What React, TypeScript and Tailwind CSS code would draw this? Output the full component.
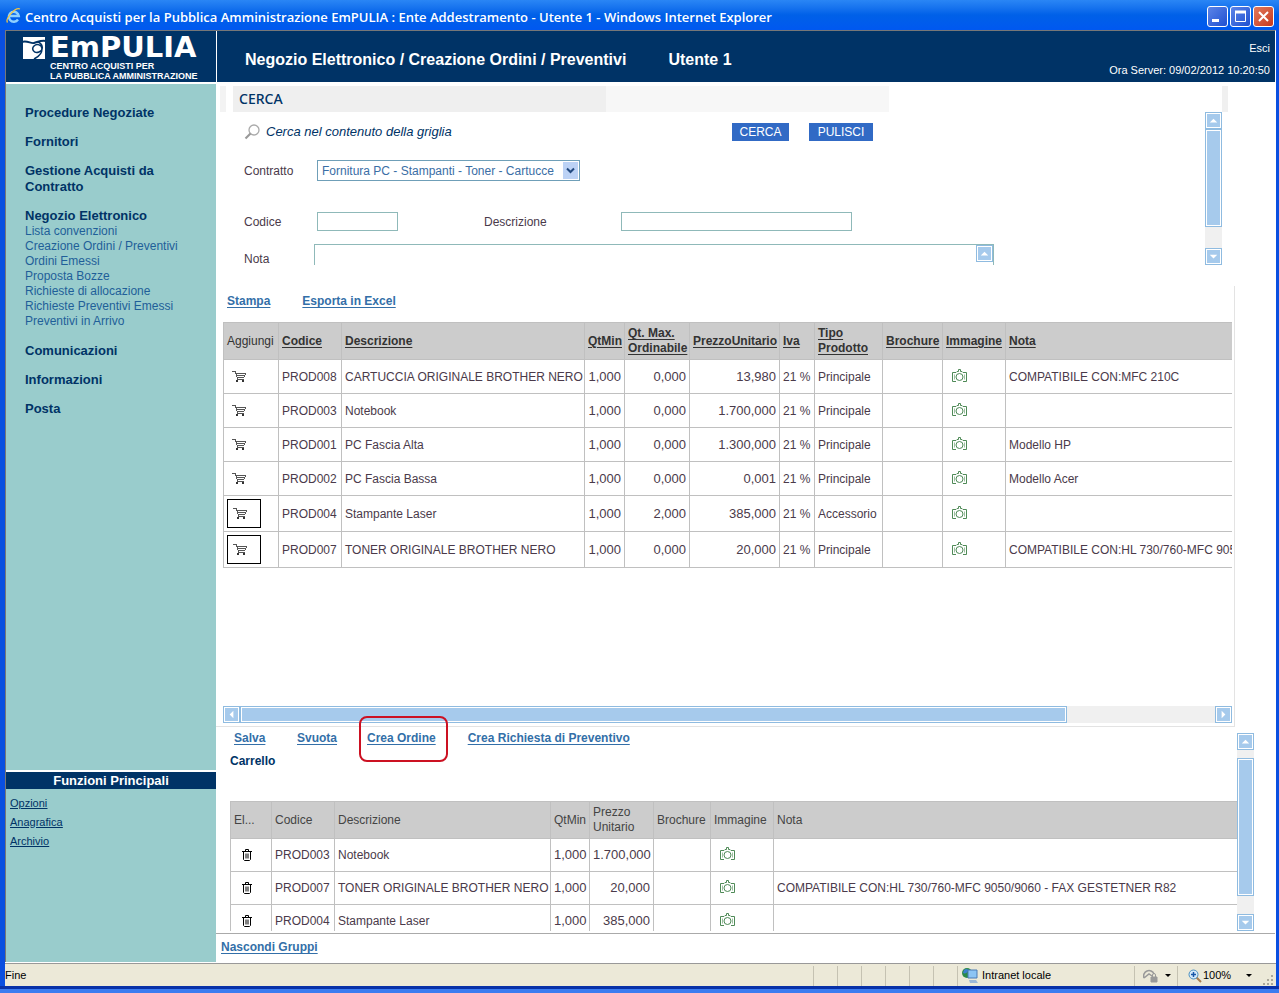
import type { ReactNode } from 'react'

type Product = {
  code: string
  name: string
  min: string
  max: string
  price: string
  type: string
  note: string
  inCart?: boolean
}

const products: Product[] = [
  { code: 'PROD008', name: 'CARTUCCIA ORIGINALE BROTHER NERO', min: '1,000', max: '0,000', price: '13,980', type: 'Principale', note: 'COMPATIBILE CON:MFC 210C' },
  { code: 'PROD003', name: 'Notebook', min: '1,000', max: '0,000', price: '1.700,000', type: 'Principale', note: '' },
  { code: 'PROD001', name: 'PC Fascia Alta', min: '1,000', max: '0,000', price: '1.300,000', type: 'Principale', note: 'Modello HP' },
  { code: 'PROD002', name: 'PC Fascia Bassa', min: '1,000', max: '0,000', price: '0,001', type: 'Principale', note: 'Modello Acer' },
  { code: 'PROD004', name: 'Stampante Laser', min: '1,000', max: '2,000', price: '385,000', type: 'Accessorio', note: '', inCart: true },
  { code: 'PROD007', name: 'TONER ORIGINALE BROTHER NERO', min: '1,000', max: '0,000', price: '20,000', type: 'Principale', note: 'COMPATIBILE CON:HL 730/760-MFC 9050/9060 - FAX GESTETNER R82', inCart: true },
]

const cart = [
  { code: 'PROD003', name: 'Notebook', min: '1,000', price: '1.700,000', note: '' },
  { code: 'PROD007', name: 'TONER ORIGINALE BROTHER NERO', min: '1,000', price: '20,000', note: 'COMPATIBILE CON:HL 730/760-MFC 9050/9060 - FAX GESTETNER R82' },
  { code: 'PROD004', name: 'Stampante Laser', min: '1,000', price: '385,000', note: '' },
]

const shopLinks = [
  'Lista convenzioni',
  'Creazione Ordini / Preventivi',
  'Ordini Emessi',
  'Proposta Bozze',
  'Richieste di allocazione',
  'Richieste Preventivi Emessi',
  'Preventivi in Arrivo',
]

function CartIcon() {
  return (
    <svg width="15" height="12" viewBox="0 0 15 12" fill="#555" shapeRendering="crispEdges">
      <path d="M0 0h4v1H0zM3 1h1v2H3zM4 2h10v1H4zM4 3h1v3H4zM5 4h8v1H5zM5 6h7v1H5zM5 7h1v2H5zM5 8h7v1H5zM13 3h1v1h-1zM12 5h1v1h-1z" />
      <path d="M4 9h2v2H4zM10 9h2v2h-2z" fill="#333" />
    </svg>
  )
}

function CameraIcon() {
  return (
    <svg width="15" height="13" viewBox="0 0 15 13" fill="none" stroke="#4f8a57" className="mb-[3px]">
      <path d="M4 12.500H.5v-9H4l1-1h1.500v-2h2v2H10l1 1h3.500v9H11" />
      <path d="M2.500 5.500v5M12.500 5.500v5" stroke="#9cc0a0" />
      <circle cx="7.500" cy="8" r="3.500" />
    </svg>
  )
}

function TrashIcon() {
  return (
    <svg width="10" height="12" viewBox="0 0 10 12" fill="none" stroke="#000">
      <path d="M0 2.500h10M3.500 2V.5h3V2M1.500 3v7.500l1 1h5l1-1V3M4 4.500v5M6 4.500v5" />
    </svg>
  )
}

const arrows = {
  up: 'M4 10h8L8 6z',
  down: 'M4 6h8l-4 4z',
  left: 'M10 4v8L6 8z',
  right: 'M6 4v8l4-4z',
}

function ScrollButton({ dir, label }: { dir: keyof typeof arrows; label: string }) {
  return (
    <button aria-label={label} className="flex size-[17px] shrink-0 items-center justify-center border border-[#8fbbe0] bg-[#a6caec] shadow-[inset_0_0_0_1px_white]">
      <svg width="15" height="15" viewBox="0 0 16 16" fill="#fff">
        <path d={arrows[dir]} />
      </svg>
    </button>
  )
}

function WinButton({ label, close, children }: { label: string; close?: boolean; children: ReactNode }) {
  return (
    <button
      aria-label={label}
      className={`flex size-[21px] items-center justify-center rounded-[3px] border border-white ${close ? 'bg-linear-to-br from-[#e0785c] to-[#c8361a]' : 'bg-linear-to-br from-[#5c84e8] to-[#1f4fd0]'}`}
    >
      <svg width="19" height="19" viewBox="0 0 19 19" fill="none" stroke="#fff">
        {children}
      </svg>
    </button>
  )
}

function TitleBar() {
  return (
    <div className="flex h-[30px] items-center gap-1 bg-linear-to-b from-[#2a86f5] via-[#0060e8] to-[#0058f0] pr-[5px] pl-1.5">
      <svg width="15" height="17" viewBox="0 0 15 17" fill="none">
        <path d="M12 12.500a5 5 0 1 1 .8-3.500H4" stroke="#8fd0ff" strokeWidth="2.400" />
        <path d="M1.500 15.500C-1 12 9 0 14 2" stroke="#f4c542" strokeWidth="1.300" />
      </svg>
      <h1 className="flex-1 truncate pt-1 font-['Open_Sans',sans-serif] text-[13px] leading-5 font-semibold text-white">
        Centro Acquisti per la Pubblica Amministrazione EmPULIA : Ente Addestramento - Utente 1 - Windows Internet Explorer
      </h1>
      <div className="flex gap-0.5 pt-0.5">
        <WinButton label="Riduci a icona">
          <path d="M4 13.500h7" strokeWidth="3" />
        </WinButton>
        <WinButton label="Ingrandisci">
          <path d="M4.500 4.500h10v10h-10z" />
          <path d="M4 5h11" strokeWidth="3" />
        </WinButton>
        <WinButton label="Chiudi" close>
          <path d="m5 5 9 9m0-9-9 9" strokeWidth="2" />
        </WinButton>
      </div>
    </div>
  )
}

function Logo() {
  return (
    <div className="flex w-[210px] shrink-0 items-start gap-1 pt-px pl-[17px] text-white">
      <svg width="23" height="27" viewBox="0 0 23 27" className="shrink-0">
        <path d="M0 5h22v22H0z" fill="#fff" />
        <path d="M-1 10c5-2 9 2 12 1 4-1 7-3 12-2" fill="none" stroke="#036" strokeWidth="2" />
        <path d="M15 10c5 2 6 8 1 10s-8-3-5-6 8-1 8 3-4 8-8 10" fill="none" stroke="#036" strokeWidth="1.500" />
      </svg>
      <div>
        <div className="font-['DejaVu_Sans',sans-serif] text-[29px] leading-[31px] font-bold">EmPULIA</div>
        <div className="-mt-0.5 text-[9px] leading-[10px] font-bold whitespace-nowrap">
          CENTRO ACQUISTI PER
          <br />
          LA PUBBLICA AMMINISTRAZIONE
        </div>
      </div>
    </div>
  )
}

function Header() {
  return (
    <header className="flex h-[51px] bg-[#003366] text-white">
      <Logo />
      <div className="flex flex-1 items-center gap-[42px] border-l border-white pt-1.5 pl-7 text-base font-bold">
        <h2>Negozio Elettronico / Creazione Ordini / Preventivi</h2>
        <span>Utente 1</span>
      </div>
      <div className="flex flex-col items-end gap-2 pt-2.5 pr-[5px] text-[11px] leading-[14px]">
        <a href="#esci">Esci</a>
        <span>Ora Server: 09/02/2012 10:20:50</span>
      </div>
    </header>
  )
}

function Sidebar() {
  return (
    <aside className="flex w-[210px] shrink-0 flex-col bg-[#99cccc] text-[#003366]">
      <nav className="flex flex-1 flex-col gap-[13px] pt-[21px] pl-[19px] text-[13px] leading-4 font-bold">
        <a href="#procedure">Procedure Negoziate</a>
        <a href="#fornitori">Fornitori</a>
        <a href="#gestione" className="w-36">Gestione Acquisti da Contratto</a>
        <div>
          <a href="#negozio">Negozio Elettronico</a>
          <ul className="pb-px text-xs leading-[15px] font-normal text-[#1f5f99]">
            {shopLinks.map((text) => (
              <li key={text}>
                <a href="#negozio">{text}</a>
              </li>
            ))}
          </ul>
        </div>
        <a href="#comunicazioni">Comunicazioni</a>
        <a href="#informazioni">Informazioni</a>
        <a href="#posta">Posta</a>
      </nav>
      <div className="border-t-2 border-white bg-[#003366] text-center text-[13px] leading-[17px] font-bold text-white">Funzioni Principali</div>
      <div className="flex h-[173px] flex-col items-start gap-1 pt-[7px] pl-1 text-[11px] leading-[15px] underline">
        <a href="#opzioni">Opzioni</a>
        <a href="#anagrafica">Anagrafica</a>
        <a href="#archivio">Archivio</a>
      </div>
    </aside>
  )
}

function SearchForm() {
  const input = 'border border-[#8fb9b9] bg-white px-1 outline-none'
  return (
    <section>
      <div className="flex h-[26px]">
        <div className="ml-1 w-1.5 bg-[#f3f3f3]" />
        <h3 className="ml-[7px] w-[373px] bg-[#efefef] pl-1.5 font-['Noto_Sans',sans-serif] text-sm leading-[26px] font-medium text-[#003366]">CERCA</h3>
        <div className="w-[283px] bg-[#f7f7f7]" />
        <div className="mr-[47px] ml-auto w-1.5 bg-[#f0f0f0]" />
      </div>
      <div className="mr-[53px] flex h-[153px]">
        <div className="flex-1 overflow-hidden pt-[11px] pl-7 text-[#4a3a4a]">
          <div className="flex h-[18px] items-center">
            <svg width="17" height="16" viewBox="0 0 17 16" fill="none">
              <circle cx="10" cy="6" r="5" stroke="#aaa" strokeWidth="1.300" />
              <path d="m6.500 9.500-5 5" stroke="#999" strokeWidth="2.200" />
            </svg>
            <span className="ml-[5px] w-[466px] text-[13px] text-[#003366] italic">Cerca nel contenuto della griglia</span>
            <button className="h-[18px] w-[57px] bg-[#316ac5] text-xs text-white">CERCA</button>
            <button className="ml-5 h-[18px] w-16 bg-[#316ac5] text-xs text-white">PULISCI</button>
          </div>
          <div className="mt-[19px] flex h-[21px] items-center">
            <label htmlFor="contratto" className="w-[73px]">Contratto</label>
            <div className="relative">
              <select id="contratto" className="h-[21px] w-[263px] appearance-none border border-[#6f9fb8] bg-white pl-1 text-[#3a6ea5]">
                <option>Fornitura PC - Stampanti - Toner - Cartucce</option>
              </select>
              <svg width="15" height="17" viewBox="0 0 15 17" className="pointer-events-none absolute top-0.5 right-0.5">
                <rect width="15" height="17" fill="#bcd2f5" />
                <path d="m4 6.500 3.500 3.500L11 6.500" fill="none" stroke="#234a80" strokeWidth="2" />
              </svg>
            </div>
          </div>
          <div className="mt-[31px] flex h-[19px] items-center">
            <label htmlFor="codice" className="w-[73px]">Codice</label>
            <input id="codice" className={`h-[19px] w-[81px] ${input}`} />
            <label htmlFor="descrizione" className="ml-[86px] w-[137px]">Descrizione</label>
            <input id="descrizione" className={`h-[19px] w-[231px] ${input}`} />
          </div>
          <div className="mt-[13px] flex">
            <label htmlFor="nota" className="w-[70px] pt-[9px] leading-3">Nota</label>
            <div className="flex h-10 w-[680px] border border-[#8fb9b9]">
              <textarea id="nota" className="flex-1 resize-none overflow-hidden outline-none" />
              <ScrollButton dir="up" label="Scorri nota in alto" />
            </div>
          </div>
        </div>
        <div className="flex w-[17px] flex-col bg-[#f0f0f0]">
          <ScrollButton dir="up" label="Scorri in alto" />
          <div className="h-[98px] border border-[#8fbbe0] bg-[#a6caec] shadow-[inset_0_0_0_1px_white]" />
          <div className="flex-1" />
          <ScrollButton dir="down" label="Scorri in basso" />
        </div>
      </div>
    </section>
  )
}

function ProductTable() {
  const cell = 'border border-[#c0c0c0] px-[3px]'
  return (
    <table className="w-[1220px] table-fixed border-collapse text-[#4a3a4a]">
      <colgroup>
        <col className="w-[55px]" />
        <col className="w-[63px]" />
        <col className="w-[243px]" />
        <col className="w-10" />
        <col className="w-[65px]" />
        <col className="w-[90px]" />
        <col className="w-[35px]" />
        <col className="w-[68px]" />
        <col className="w-[60px]" />
        <col className="w-[63px]" />
        <col />
      </colgroup>
      <thead className="bg-[#cccccc] text-left text-[#333]">
        <tr className="h-[37px] leading-[15px] whitespace-nowrap underline underline-offset-2">
          <th className={`${cell} font-normal`}>
            <span className="inline-block">Aggiungi</span>
          </th>
          <th className={cell}>Codice</th>
          <th className={cell}>Descrizione</th>
          <th className={cell}>QtMin</th>
          <th className={cell}>Qt. Max.<br />Ordinabile</th>
          <th className={cell}>PrezzoUnitario</th>
          <th className={cell}>Iva</th>
          <th className={cell}>Tipo<br />Prodotto</th>
          <th className={cell}>Brochure</th>
          <th className={cell}>Immagine</th>
          <th className={cell}>Nota</th>
        </tr>
      </thead>
      <tbody>
        {products.map((p) => (
          <tr key={p.code} className={`whitespace-nowrap ${p.inCart ? 'h-9' : 'h-[34px]'}`}>
            <td className={cell}>
              <button
                aria-label={`Aggiungi ${p.code}`}
                className={`flex items-center pl-[5px] ${p.inCart ? 'h-[29px] w-[34px] border border-black' : ''}`}
              >
                <CartIcon />
              </button>
            </td>
            <td className={cell}>{p.code}</td>
            <td className={cell}>{p.name}</td>
            <td className={`${cell} text-right text-[13px]`}>{p.min}</td>
            <td className={`${cell} text-right text-[13px]`}>{p.max}</td>
            <td className={`${cell} text-right text-[13px]`}>{p.price}</td>
            <td className={cell}>21 %</td>
            <td className={cell}>{p.type}</td>
            <td className={cell} />
            <td className="border border-[#c0c0c0] pl-[9px]">
              <CameraIcon />
            </td>
            <td className={cell}>{p.note}</td>
          </tr>
        ))}
      </tbody>
    </table>
  )
}

function CartTable() {
  const cell = 'border border-r-0 border-[#c0c0c0] px-[3px]'
  return (
    <table className="w-full table-fixed border-collapse text-[#4a3a4a]">
      <colgroup>
        <col className="w-[41px]" />
        <col className="w-[63px]" />
        <col className="w-[216px]" />
        <col className="w-[39px]" />
        <col className="w-16" />
        <col className="w-[57px]" />
        <col className="w-[63px]" />
        <col />
      </colgroup>
      <thead className="bg-[#cccccc] text-left text-[#444]">
        <tr className="h-[37px] leading-[15px] whitespace-nowrap *:font-normal">
          <th className={cell}>El...</th>
          <th className={cell}>Codice</th>
          <th className={cell}>Descrizione</th>
          <th className={cell}>QtMin</th>
          <th className={cell}>Prezzo<br />Unitario</th>
          <th className={cell}>Brochure</th>
          <th className={cell}>Immagine</th>
          <th className={cell}>Nota</th>
        </tr>
      </thead>
      <tbody>
        {cart.map((p) => (
          <tr key={p.code} className="h-[33px] whitespace-nowrap">
            <td className={cell}>
              <button aria-label={`Elimina ${p.code}`} className="block pl-2">
                <TrashIcon />
              </button>
            </td>
            <td className={cell}>{p.code}</td>
            <td className={cell}>{p.name}</td>
            <td className={`${cell} text-right text-[13px]`}>{p.min}</td>
            <td className={`${cell} text-right text-[13px]`}>{p.price}</td>
            <td className={cell} />
            <td className="border border-[#c0c0c0] pl-[9px]">
              <CameraIcon />
            </td>
            <td className={cell}>{p.note}</td>
          </tr>
        ))}
      </tbody>
    </table>
  )
}

function CartPanel() {
  return (
    <section className="mr-[21px] flex h-[204px] pt-0.5">
      <div className="flex min-w-0 flex-1 flex-col pl-3.5">
        <div className="flex h-[17px] items-center pl-1 font-bold text-[#336fa8]">
          <a href="#salva" className="w-[63px] underline underline-offset-2">Salva</a>
          <a href="#svuota" className="w-[70px] underline underline-offset-2">Svuota</a>
          <a href="#ordine" className="relative mr-8 underline underline-offset-2">
            Crea Ordine
            <span className="absolute -top-[14px] -right-3 -bottom-4 -left-2 rounded-lg border-2 border-[#cc1122]" />
          </a>
          <a href="#preventivo" className="underline underline-offset-2">Crea Richiesta di Preventivo</a>
        </div>
        <h3 className="mt-[7px] h-12 shrink-0 font-bold text-[#003366]">Carrello</h3>
        <div className="flex-1 overflow-hidden">
          <CartTable />
        </div>
      </div>
      <div className="mt-1 flex w-[17px] flex-col bg-[#f0f0f0]">
        <ScrollButton dir="up" label="Scorri carrello in alto" />
        <div className="mt-2 h-[138px] border border-[#8fbbe0] bg-[#a6caec] shadow-[inset_0_0_0_1px_white]" />
        <div className="flex-1" />
        <ScrollButton dir="down" label="Scorri carrello in basso" />
      </div>
    </section>
  )
}

function StatusBar() {
  return (
    <footer className="flex h-[23px] items-center border-t border-[#999] bg-[#ece9d8] pt-px text-[11px] text-black">
      <span className="flex-1">Fine</span>
      {[1, 2, 3, 4, 5, 6].map((n) => (
        <span key={n} className="h-5 w-6 border-l border-[#c5c2b2]" />
      ))}
      <div className="flex h-5 w-[177px] items-center gap-1 border-l border-[#c5c2b2] pl-1">
        <svg width="16" height="16" viewBox="0 0 16 16">
          <circle cx="5" cy="5" r="5" fill="#2c8a4a" />
          <path d="M2 2c2-2 5-1 4 1S3 6 1 5z" fill="#3b7fd0" />
          <path d="M6 2h9v8H6z" fill="#8cc4f4" stroke="#4a7ab5" />
          <path d="M7 12h7l2 3H8z" fill="#9cb8d8" />
        </svg>
        Intranet locale
      </div>
      <div className="flex h-5 w-[43px] items-center gap-1.5 border-l border-[#c5c2b2] pl-2">
        <svg width="16" height="15" viewBox="0 0 16 15" fill="none" stroke="#999">
          <path d="M1 10a5 5 0 0 1 10-4M1 10l5-4 3 2" strokeWidth="1.500" />
          <path d="M8 9h6v5H8z" fill="#999" />
          <path d="M9.500 9V7a1.500 1.500 0 0 1 3 0v2" />
        </svg>
        <svg width="6" height="3" viewBox="0 0 6 3"><path d="M0 0h6L3 3z" /></svg>
      </div>
      <div className="flex h-5 w-[99px] items-center border-l border-[#c5c2b2] pl-2.5">
        <svg width="14" height="14" viewBox="0 0 14 14" fill="none">
          <path d="m8 8 5 5" stroke="#a87d50" strokeWidth="2" />
          <circle cx="5.500" cy="5.500" r="4.500" fill="#d5eafa" stroke="#4a8fc0" />
          <path d="M3 5.500h5M5.500 3v5" stroke="#1757a8" strokeWidth="1.500" />
        </svg>
        <span className="ml-px w-[43px]">100%</span>
        <svg width="6" height="3" viewBox="0 0 6 3"><path d="M0 0h6L3 3z" /></svg>
        <svg width="11" height="11" viewBox="0 0 11 11" className="mr-0.5 ml-auto self-end" fill="#aaa79a">
          <path d="M8 0h2v2H8zM4 4h2v2H4zM8 4h2v2H8zM0 8h2v2H0zM4 8h2v2H4zM8 8h2v2H8z" />
        </svg>
      </div>
    </footer>
  )
}

export default function App() {
  return (
    <div className="flex min-h-screen flex-col bg-[#0a4fe0] font-['Liberation_Sans',Arial,sans-serif] text-xs">
      <TitleBar />
      <div className="mr-[3px] ml-[5px] flex flex-1 flex-col border-t border-r border-l border-[#777] border-r-white bg-white">
        <Header />
        <div className="flex flex-1 pt-0.5">
          <Sidebar />
          <main className="flex min-w-0 flex-1 flex-col pt-0.5">
            <SearchForm />
            <section className="mt-[21px] mr-10 flex flex-1 flex-col border-r border-b border-[#e3e3e3] pr-0.5 pl-[7px]">
              <div className="flex h-9 gap-8 pt-[7px] pl-1 font-bold text-[#336fa8]">
                <a href="#stampa" className="underline underline-offset-2">Stampa</a>
                <a href="#excel" className="underline underline-offset-2">Esporta in Excel</a>
              </div>
              <div className="flex-1 overflow-hidden">
                <ProductTable />
              </div>
              <div className="mb-[3px] flex h-[17px] bg-[#f0f0f0]">
                <ScrollButton dir="left" label="Scorri a sinistra" />
                <div className="w-[82%] border border-[#8fbbe0] bg-[#a6caec] shadow-[inset_0_0_0_1px_white]" />
                <div className="flex-1" />
                <ScrollButton dir="right" label="Scorri a destra" />
              </div>
            </section>
            <CartPanel />
            <div className="mt-0.5 h-[29px] border-t border-[#aaa] pt-[5px] pl-[5px]">
              <a href="#gruppi" className="font-bold text-[#336fa8] underline underline-offset-2">Nascondi Gruppi</a>
            </div>
          </main>
        </div>
      </div>
      <div className="mr-[3px] ml-[5px] bg-white pt-px">
        <StatusBar />
      </div>
      <div className="h-[7px] border-t-3 border-[#0831a8] bg-[#3c7cf0]" />
    </div>
  )
}
